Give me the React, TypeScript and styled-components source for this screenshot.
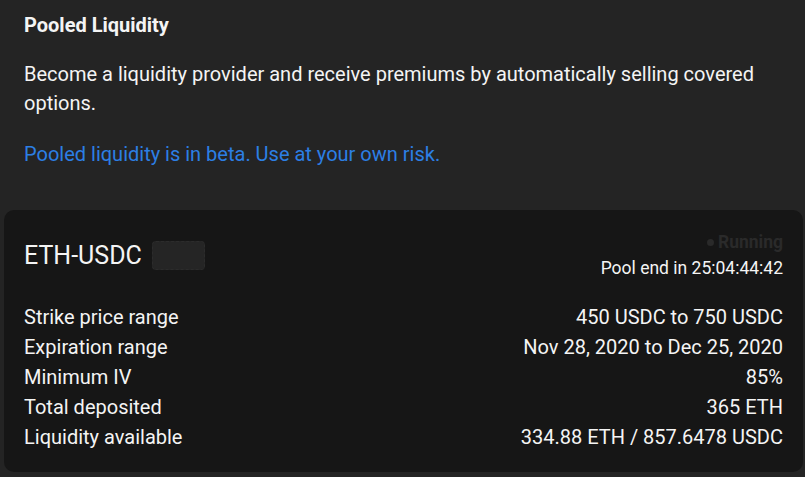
import React from "react";
import styled, { createGlobalStyle } from "styled-components";

const Global = createGlobalStyle`
  html, body { margin: 0; padding: 0; background: #242424; }
  body { font-family: Roboto, "Noto Sans", "Liberation Sans", sans-serif; color: #f4f4f4; }
`;

const Page = styled.div`
  padding: 0 4px;
  width: 805px;
  box-sizing: border-box;
`;

const Intro = styled.section`
  padding: 12px 20px 0;
`;

const Title = styled.h2`
  margin: 0;
  font-size: 20px;
  font-weight: 700;
  line-height: 26px;
`;

const Text = styled.p<{ $accent?: boolean }>`
  margin: 0;
  font-size: 20px;
  line-height: 29px;
  color: ${(p) => (p.$accent ? "#2c7fe4" : "#f4f4f4")};
`;

const Desc = styled(Text)`
  margin-top: 22px;
`;

const Beta = styled(Text)`
  margin-top: 22px;
`;

const Card = styled.section`
  margin-top: 41px;
  background: #161616;
  border-radius: 10px;
  padding: 22px 20px 20px;
  width: 799px;
  box-sizing: border-box;
`;

const CardHead = styled.div`
  display: flex;
  justify-content: space-between;
  align-items: flex-start;
`;

const PairGroup = styled.div`
  display: flex;
  align-items: center;
  gap: 10px;
  padding-top: 9px;
`;

const Pair = styled.span`
  font-size: 25px;
  line-height: 28px;
`;

const Placeholder = styled.span`
  width: 53px;
  height: 29px;
  border-radius: 4px;
  background: #252525;
  box-sizing: border-box;
  border: 1px dashed #2c2c2c;
`;

const Status = styled.div`
  display: flex;
  flex-direction: column;
  align-items: flex-end;
`;

const Running = styled.span`
  display: flex;
  align-items: center;
  gap: 4px;
  font-size: 17.5px;
  font-weight: 700;
  line-height: 20px;
  color: #2a2a2a;
`;

const Dot = styled.span`
  width: 7px;
  height: 7px;
  border-radius: 50%;
  background: #2a2a2a;
`;

const PoolEnd = styled.span`
  font-size: 17.5px;
  line-height: 22px;
  margin-top: 5px;
`;

const Rows = styled.dl`
  margin: 23px 0 0;
  display: grid;
  grid-template-columns: 1fr auto;
`;

const Label = styled.dt`
  font-size: 20px;
  line-height: 30px;
`;

const Value = styled.dd`
  margin: 0;
  font-size: 20px;
  line-height: 30px;
  text-align: right;
`;

const rows: [string, string][] = [
  ["Strike price range", "450 USDC to 750 USDC"],
  ["Expiration range", "Nov 28, 2020 to Dec 25, 2020"],
  ["Minimum IV", "85%"],
  ["Total deposited", "365 ETH"],
  ["Liquidity available", "334.88 ETH / 857.6478 USDC"],
];

export default function App() {
  return (
    <Page>
      <Global />
      <Intro>
        <Title>Pooled Liquidity</Title>
        <Desc>
          Become a liquidity provider and receive premiums by automatically selling covered options.
        </Desc>
        <Beta $accent>Pooled liquidity is in beta. Use at your own risk.</Beta>
      </Intro>
      <Card>
        <CardHead>
          <PairGroup>
            <Pair>ETH-USDC</Pair>
            <Placeholder />
          </PairGroup>
          <Status>
            <Running>
              <Dot />
              Running
            </Running>
            <PoolEnd>Pool end in 25:04:44:42</PoolEnd>
          </Status>
        </CardHead>
        <Rows>
          {rows.map(([l, v]) => (
            <React.Fragment key={l}>
              <Label>{l}</Label>
              <Value>{v}</Value>
            </React.Fragment>
          ))}
        </Rows>
      </Card>
    </Page>
  );
}
